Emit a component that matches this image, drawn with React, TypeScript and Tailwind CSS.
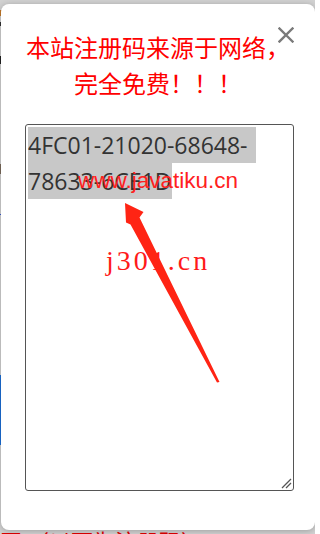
import React from "react";

const CJK = "font-['Microsoft_YaHei','Noto_Sans_CJK_SC',sans-serif]";

const CloseIcon = () => (
  <svg width="16" height="16" viewBox="0 0 16 16" fill="none">
    <path d="M1.5 1.5 L14.5 14.5 M14.5 1.5 L1.5 14.5" stroke="#7a7a7a" strokeWidth="2.4" strokeLinecap="square" />
  </svg>
);

const ResizeGrip = () => (
  <svg className="absolute right-[1px] bottom-[1px]" width="12" height="12" viewBox="0 0 12 12">
    <path d="M2 11 L11 2 M6 11 L11 6" stroke="#555" strokeWidth="1.3" />
  </svg>
);

const ArrowMark = () => (
  <svg className="pointer-events-none absolute inset-0" width="315" height="534" viewBox="0 0 315 534">
    <polygon
      points="125,203 143.5,212 139.5,217.5 219.5,382 217,382.5 130.5,224.5 126,222.5"
      fill="#ff2414"
    />
  </svg>
);

const CodeBox = () => (
  <div className="relative ml-[24px] mt-[23px] h-[367px] w-[269px] rounded-[3px] border border-[#555] pt-[2px] pl-[2px]">
    <div className="font-['Segoe_UI','Open_Sans',sans-serif] text-[23px] leading-[36px] text-[#333]">
      <div>
        <span className="inline-block bg-[#c8c8c8] pr-[8px]">4FC01-21020-68648-</span>
      </div>
      <div>
        <span className="inline-block bg-[#c8c8c8] pr-[1px]">78633-6CE1D</span>
      </div>
    </div>
    <div className="pointer-events-none absolute left-[52px] top-[45px] font-['Liberation_Sans',Arial,sans-serif] text-[22.5px] leading-[22px] text-[#ff2020] whitespace-nowrap">
      www.javatiku.cn
    </div>
    <div className="pointer-events-none absolute left-[80px] top-[122px] font-['Liberation_Serif',serif] text-[28px] leading-[28px] tracking-[3px] text-[#ff1a1a] whitespace-nowrap">
      j301.cn
    </div>
    <ResizeGrip />
  </div>
);

export default function App() {
  return (
    <div className="relative h-[534px] w-[315px] overflow-hidden bg-[#d2d2d2]">
      {/* page behind the dialog */}
      <div className="flex h-full flex-col">
        <div className="flex w-[2px] flex-col">
          <div className="mt-[10px] h-[6px] bg-[#c47a2a]" />
          <div className="mt-[6px] h-[4px] bg-[#333]" />
          <div className="mt-[30px] h-[8px] bg-[#222]" />
          <div className="mt-[100px] h-[10px] bg-[#7a6a5a]" />
          <div className="mt-[40px] h-[1px] bg-[#3a5ad0]" />
          <div className="mt-[160px] h-[70px] bg-[#1a6fd8]" />
        </div>
        <div className="flex-1" />
        <div className={`h-[8px] overflow-hidden whitespace-nowrap text-[22px] leading-[28px] text-[#e00000] ${CJK}`}>
          网 （以下为注册码）
        </div>
      </div>

      <div className="absolute left-[1px] top-[4px] flex h-[526px] w-[314px] flex-col rounded-[8px] bg-white pt-[25px] shadow-[0_1px_6px_rgba(0,0,0,0.25)]">
        <button type="button" className="absolute left-[277px] top-[23px]">
          <CloseIcon />
        </button>
        <h2 className={`text-center text-[24px] font-normal leading-[36px] text-[#ff0000] ${CJK}`}>
          本站注册码来源于网络，
          <br />
          完全免费！！！
        </h2>
        <CodeBox />
      </div>

      <ArrowMark />
    </div>
  );
}
